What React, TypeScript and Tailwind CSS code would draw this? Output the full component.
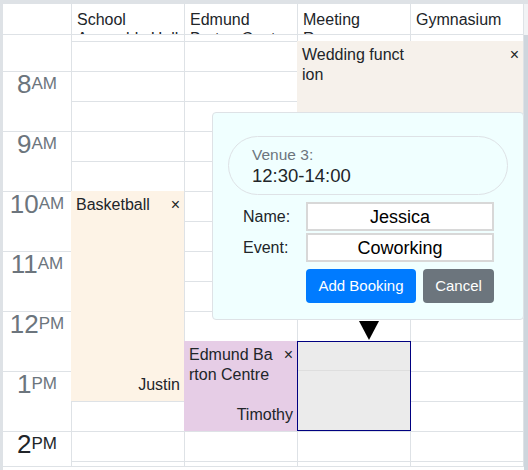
import React from "react";

const columns = [
  "School Assembly Hall",
  "Edmund Barton Centre",
  "Meeting Room",
  "Gymnasium",
];

const hours = [
  { d: "8", s: "AM", now: false },
  { d: "9", s: "AM", now: false },
  { d: "10", s: "AM", now: false },
  { d: "11", s: "AM", now: false },
  { d: "12", s: "PM", now: false },
  { d: "1", s: "PM", now: false },
  { d: "2", s: "PM", now: true },
];

const slots = Array.from({ length: 15 }, (_, i) => i);

export default function App() {
  return (
    <div className="w-[528px] h-[470px] overflow-hidden bg-white text-[#212529] font-['Liberation_Sans',Arial,sans-serif] flex flex-col">
      <div className="h-[4px] bg-[#dee2e6] shrink-0" />
      <div className="flex flex-1 min-h-0">
        <div className="w-[3px] bg-[#dee2e6] shrink-0" />
        <div className="w-[521px] flex flex-col shrink-0">
          {/* header */}
          <div className="flex h-[31px] border-b border-[#dee2e6] shrink-0">
            <div className="w-[69px] border-r border-[#dee2e6]" />
            {columns.map((c) => (
              <div
                key={c}
                className="w-[113px] border-r border-[#dee2e6] px-[5px] pt-[6px] overflow-hidden text-[16px] leading-[19px]"
              >
                {c}
              </div>
            ))}
          </div>
          {/* body */}
          <div className="relative flex h-[432px] border-b border-[#dee2e6] overflow-hidden shrink-0">
            <div className="w-[69px] border-r border-[#dee2e6] flex flex-col shrink-0">
              <div className="h-[37px] border-b border-[#dee2e6] shrink-0" />
              {hours.map((h) => (
                <div key={h.d} className="h-[60px] border-b border-[#dee2e6] shrink-0">
                  <div
                    className={`h-[23px] flex items-center justify-center ${
                      h.now ? "text-[#212529]" : "text-[#6c757d]"
                    }`}
                  >
                    <span className="text-[26px] leading-none">{h.d}</span>
                    <span className="text-[17px] leading-none">{h.s}</span>
                  </div>
                </div>
              ))}
            </div>
            {columns.map((c) => (
              <div key={c} className="w-[113px] border-r border-[#dee2e6] flex flex-col shrink-0">
                <div className="h-[7px] border-b border-[#dee2e6] shrink-0" />
                {slots.map((s) => (
                  <div key={s} className="h-[30px] border-b border-[#dee2e6] shrink-0" />
                ))}
              </div>
            ))}

            {/* Wedding function */}
            <div className="absolute left-[294px] top-[6px] w-[226px] h-[90px] bg-[#f6f1eb] pl-[5px] pr-[4px] pt-[4px] text-[16px] leading-[20px] flex justify-between">
              <div>
                <span className="block">Wedding funct</span>
                <span className="block">ion</span>
              </div>
              <span>×</span>
            </div>

            {/* Basketball */}
            <div className="absolute left-[68px] top-[156px] w-[113px] h-[210px] bg-[#fdf3e6] pl-[5px] pr-[4px] pt-[4px] pb-[6px] text-[16px] leading-[20px] flex flex-col justify-between">
              <div className="flex justify-between">
                <span>Basketball</span>
                <span>×</span>
              </div>
              <div className="text-right">Justin</div>
            </div>

            {/* Edmund Barton Centre */}
            <div className="absolute left-[181px] top-[306px] w-[113px] h-[90px] bg-[#e6cde6] pl-[5px] pr-[4px] pt-[4px] pb-[6px] text-[16px] leading-[20px] flex flex-col justify-between">
              <div className="flex justify-between">
                <div>
                  <span className="block">Edmund Ba</span>
                  <span className="block">rton Centre</span>
                </div>
                <span>×</span>
              </div>
              <div className="text-right">Timothy</div>
            </div>

            {/* Selected slot */}
            <div className="absolute left-[294px] top-[306px] w-[114px] h-[90px] bg-[#ebebeb] border border-[#000080] flex flex-col">
              <div className="h-[29px] border-b border-[#dedede]" />
            </div>

            {/* Arrow */}
            <svg
              className="absolute left-[356px] top-[286px]"
              width="20"
              height="19"
              viewBox="0 0 20 19"
            >
              <polygon points="0,0 20,0 10,19" fill="#000" />
            </svg>

            {/* Popup */}
            <div className="absolute left-[209px] top-[77px] w-[312px] h-[208px] bg-[#f0ffff] border border-[#dee2e6] rounded-[4px] px-[15px] pt-[23px] flex flex-col">
              <div className="h-[59px] rounded-full border border-[#dee2e6] pl-[23px] flex flex-col justify-center">
                <div className="text-[15.5px] leading-[20px] text-[#6c757d]">Venue 3:</div>
                <div className="text-[18.5px] leading-[22px] text-[#212529]">12:30-14:00</div>
              </div>
              <div className="mt-[7px] ml-[15px] grid grid-cols-[63px_188px] gap-y-[2px] items-center">
                <div className="text-[16px] leading-[20px]">Name:</div>
                <div className="h-[29px] border-2 border-[#d8d8d8] bg-white text-[18px] leading-none flex items-center justify-center text-black">
                  Jessica
                </div>
                <div className="text-[16px] leading-[20px]">Event:</div>
                <div className="h-[29px] border-2 border-[#d8d8d8] bg-white text-[18px] leading-none flex items-center justify-center text-black">
                  Coworking
                </div>
              </div>
              <div className="mt-[7px] ml-[78px] flex gap-[7px]">
                <div className="h-[34px] w-[110px] rounded-[4px] bg-[#007bff] text-white text-[15px] flex items-center justify-center">
                  Add Booking
                </div>
                <div className="h-[34px] w-[71px] rounded-[4px] bg-[#6c757d] text-white text-[15px] flex items-center justify-center">
                  Cancel
                </div>
              </div>
            </div>
          </div>
          <div className="flex-1" />
        </div>
        <div className="w-[4px] flex flex-col shrink-0">
          <div className="h-[31px] bg-[#f1f3f5]" />
          <div className="flex-1 bg-[#ced6dd]" />
        </div>
      </div>
    </div>
  );
}
